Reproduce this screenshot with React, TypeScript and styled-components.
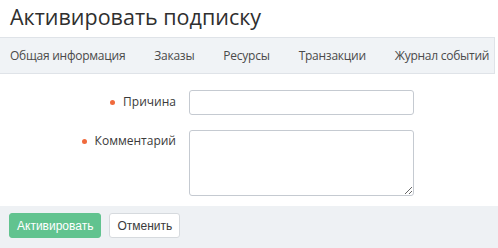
import React from 'react';
import styled, { createGlobalStyle } from 'styled-components';

const GlobalStyle = createGlobalStyle`
  body {
    margin: 0;
    background: #fff;
    font-family: "Open Sans", "Liberation Sans", sans-serif;
    color: #333;
  }
`;

const Page = styled.div`
  width: 498px;
  height: 248px;
  display: flex;
  flex-direction: column;
  overflow: hidden;
`;

const Title = styled.h1`
  margin: 0;
  height: 37px;
  padding: 0 10px;
  font-size: 21.5px;
  font-weight: 400;
  line-height: 33px;
  color: #2f2f2f;
`;

const TabBar = styled.nav`
  display: flex;
  align-items: center;
  gap: 29px;
  height: 35px;
  width: 484px;
  padding-left: 10px;
  background: #f0f3f6;
  border-top: 1px solid #dfe3e8;
  border-bottom: 1px solid #dfe3e8;
  border-right: 1px solid #dfe3e8;
`;

const Tab = styled.span`
  font-size: 12px;
  letter-spacing: -0.25px;
  color: #4a4a4a;
  white-space: nowrap;
`;

const Form = styled.div`
  display: grid;
  grid-template-columns: 176px 225px;
  column-gap: 13px;
  row-gap: 15px;
  padding: 16px 0 10px;
`;

const Label = styled.label<{ top: number }>`
  display: flex;
  align-items: center;
  justify-content: flex-end;
  align-self: start;
  padding-top: ${({ top }) => top}px;
  font-size: 12px;
  color: #3a3a3a;
  line-height: 18px;
`;

const RequiredDot = styled.span`
  width: 5px;
  height: 5px;
  border-radius: 50%;
  background: #f06a3c;
  margin-right: 8px;
`;

const TextInput = styled.input`
  box-sizing: border-box;
  width: 225px;
  height: 25px;
  border: 1px solid #c5cad1;
  border-radius: 3px;
  margin: 0;
`;

const TextArea = styled.textarea`
  box-sizing: border-box;
  width: 225px;
  height: 66px;
  border: 1px solid #c5cad1;
  border-radius: 3px;
  margin: 0;
`;

const Footer = styled.div`
  flex: 1;
  display: flex;
  align-items: flex-start;
  gap: 8px;
  padding: 7px 9px 0;
  background: #eef1f4;
`;

const Button = styled.button<{ primary?: boolean }>`
  height: 25px;
  padding: 0 7px;
  font-family: "Liberation Sans", Arial, sans-serif;
  font-size: 12px;
  border-radius: 3px;
  cursor: pointer;
  border: 1px solid ${({ primary }) => (primary ? '#61c38f' : '#d6dade')};
  background: ${({ primary }) => (primary ? '#61c38f' : '#fff')};
  color: ${({ primary }) => (primary ? '#fff' : '#3b3b3b')};
`;

const tabs = ['Общая информация', 'Заказы', 'Ресурсы', 'Транзакции', 'Журнал событий'];

const App: React.FC = () => (
  <Page>
    <GlobalStyle />
    <Title>Активировать подписку</Title>
    <TabBar>
      {tabs.map(t => (
        <Tab key={t}>{t}</Tab>
      ))}
    </TabBar>
    <Form>
      <Label top={3}>
        <RequiredDot />
        Причина
      </Label>
      <TextInput />
      <Label top={2}>
        <RequiredDot />
        Комментарий
      </Label>
      <TextArea />
    </Form>
    <Footer>
      <Button primary>Активировать</Button>
      <Button>Отменить</Button>
    </Footer>
  </Page>
);

export default App;
